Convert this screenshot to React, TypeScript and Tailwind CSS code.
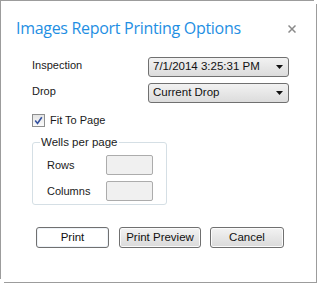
import React from 'react';

function Combo({ value }: { value: string }) {
  return (
    <div className="w-[141px] h-[20px] flex items-center justify-between pl-[4px] pr-[5px] rounded-[3px] border border-[#707070] bg-gradient-to-b from-[#f2f2f2] to-[#dcdcdc] text-[11.5px] text-[#111]">
      <span>{value}</span>
      <svg width="7" height="4" viewBox="0 0 7 4">
        <path d="M0 0h7L3.5 4z" fill="#111" />
      </svg>
    </div>
  );
}

function Button({ label, width, primary }: { label: string; width: string; primary?: boolean }) {
  return (
    <button
      className={
        width +
        ' h-[21px] rounded-[3px] border border-[#707070] text-[11.5px] text-[#111] ' +
        (primary
          ? 'bg-white shadow-[inset_0_0_0_1px_#eef3f8]'
          : 'bg-gradient-to-b from-[#f3f3f3] to-[#dadada] shadow-[inset_0_0_0_1px_#fbfbfb]')
      }
    >
      {label}
    </button>
  );
}

export default function App() {
  return (
    <div className="w-[318px] h-[283px] bg-white font-['Liberation_Sans',Arial,sans-serif]">
      <div className="w-[314px] h-[279px] border-t border-l border-[#9c9c9c]">
        <div className="ml-[3px] mt-[3px] w-[313px] h-[279px] border-r border-b border-[#9c9c9c]">
          <div className="flex items-center justify-between pl-[12px] pr-[20px] pt-[11px] h-[36px]">
            <h1 className="text-[#1f8fe3] text-[16px] leading-[20px] font-['Open_Sans',sans-serif] tracking-[-0.3px]">
              Images Report Printing Options
            </h1>
            <svg width="8" height="8" viewBox="0 0 8 8" className="mt-[2px]">
              <path d="M0.5 0.5l7 7M7.5 0.5l-7 7" stroke="#8a8a8a" strokeWidth="1.5" />
            </svg>
          </div>

          <div className="pl-[28px] pt-[17px] text-[11px] text-[#1a1a1a]">
            <div className="grid grid-cols-[116px_auto] gap-y-[6px] items-center">
              <span className="self-start">Inspection</span>
              <Combo value="7/1/2014 3:25:31 PM" />
              <span className="self-start">Drop</span>
              <Combo value="Current Drop" />
            </div>

            <label className="flex items-center gap-[5px] mt-[10px] h-[14px]">
              <span className="w-[13px] h-[13px] border border-[#8e8f8f] bg-gradient-to-b from-[#e4e4e4] to-[#fbfbfb] flex items-center justify-center">
                <svg width="9" height="9" viewBox="0 0 9 9">
                  <path d="M1.2 4.6l2.3 2.8L7.8 1.2" stroke="#3552a0" strokeWidth="1.6" fill="none" />
                </svg>
              </span>
              <span>Fit To Page</span>
            </label>

            <fieldset className="w-[135px] h-[70px] mt-[8px] border border-[#d5dfe5] rounded-[3px] pl-[14px] pr-0 pb-0 pt-0">
              <legend className="-ml-[7px] px-[1px] text-[11.5px] leading-[14px]">Wells per page</legend>
              <div className="grid grid-cols-[59px_47px] gap-y-[6px] items-center mt-[6px]">
                <span>Rows</span>
                <div className="h-[20px] border border-[#acacac] rounded-[2px] bg-[#f0f0f0]" />
                <span>Columns</span>
                <div className="h-[20px] border border-[#acacac] rounded-[2px] bg-[#f0f0f0]" />
              </div>
            </fieldset>
          </div>

          <div className="flex pl-[32px] mt-[22px]">
            <Button label="Print" width="w-[73px]" primary />
            <div className="w-[10px]" />
            <Button label="Print Preview" width="w-[82px]" />
            <div className="w-[9px]" />
            <Button label="Cancel" width="w-[74px]" />
          </div>
        </div>
      </div>
    </div>
  );
}
